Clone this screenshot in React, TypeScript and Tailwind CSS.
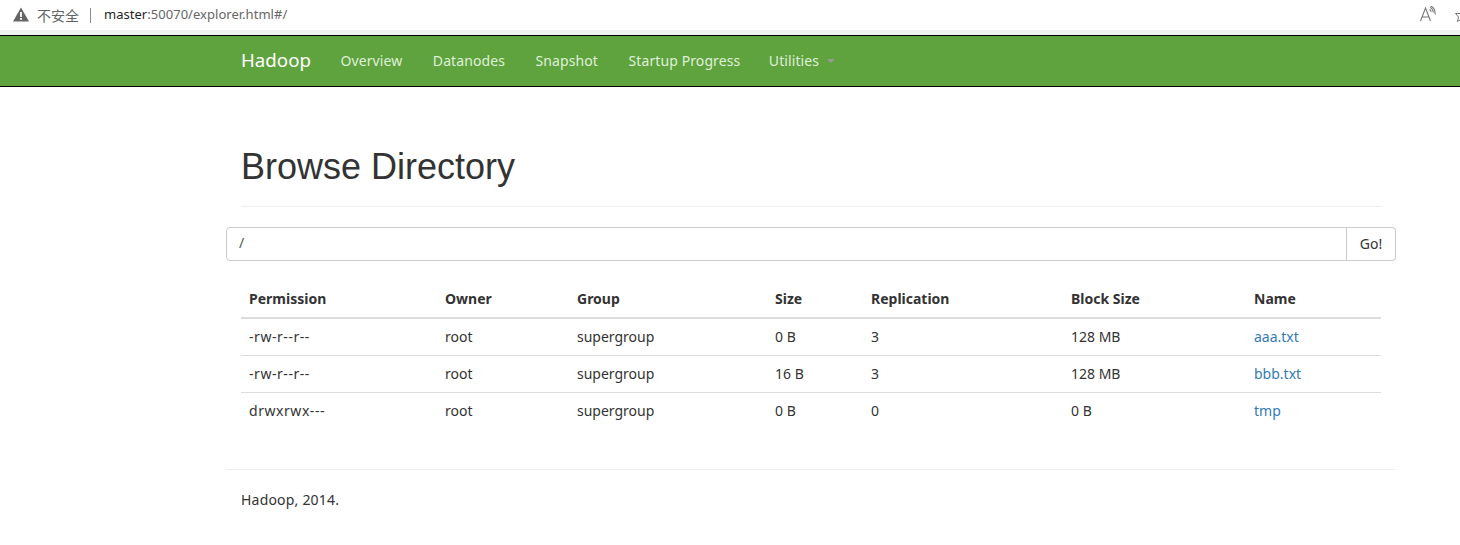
const uiFont = "font-['Noto_Sans','Open_Sans',sans-serif]";

const navItems = ["Overview", "Datanodes", "Snapshot", "Startup Progress"];

const rows = [
  { permission: "-rw-r--r--", owner: "root", group: "supergroup", size: "0 B", replication: "3", blockSize: "128 MB", name: "aaa.txt" },
  { permission: "-rw-r--r--", owner: "root", group: "supergroup", size: "16 B", replication: "3", blockSize: "128 MB", name: "bbb.txt" },
  { permission: "drwxrwx---", owner: "root", group: "supergroup", size: "0 B", replication: "0", blockSize: "0 B", name: "tmp" },
];

const headers = ["Permission", "Owner", "Group", "Size", "Replication", "Block Size", "Name"];

function AddressBar() {
  return (
    <div className="flex h-[30px] items-center bg-white pl-[13px]">
      <svg width="16" height="15" viewBox="0 0 16 15" className="mr-2 -mt-px">
        <path d="M8 0.5 L16 14.5 L0 14.5 Z" fill="#666666" />
        <rect x="7.1" y="5" width="1.8" height="5" fill="#ffffff" />
        <rect x="7.1" y="11" width="1.8" height="1.8" fill="#ffffff" />
      </svg>
      <span className="text-[14px] text-[#5f6368] font-['Noto_Sans_CJK_SC',sans-serif]">不安全</span>
      <span className="ml-[11px] mr-[13px] h-[15px] w-px bg-[#8a8a8a]" />
      <span className={`text-[13px] tracking-[0.03px] text-[#1f1f1f] ${uiFont}`}>
        master<span className="text-[#666666]">:50070/explorer.html#/</span>
      </span>
      <div className="ml-auto flex items-center gap-[19px] overflow-hidden">
        <svg width="16" height="16" viewBox="0 0 16 16" fill="none" stroke="#777777" strokeWidth="1.1" className="-mt-0.5">
          <path d="M0.5 15 L5.5 2 L10.5 15 M2 11 H9" />
          <path d="M9.5 3.5 C10.5 4 11 5 11.2 6 M10 1.5 C12 2.2 13 3.8 13.3 6.5 M10.5 0 C13.5 0.8 15 3.5 15.3 8.5" />
        </svg>
        <svg width="5" height="14" viewBox="0 0 5 14" fill="none" stroke="#777777" strokeWidth="1" className="mt-1">
          <path d="M0.5 3.5 H5 M0.5 3.5 L3.5 7 L2.5 11.5 L5 10" />
        </svg>
      </div>
    </div>
  );
}

function Navbar() {
  return (
    <nav className="h-[52px] border-y border-black bg-[#5fa33e]">
      <div className={`ml-[226px] flex h-full w-[1170px] items-center pb-0.5 pl-[15px] ${uiFont}`}>
        <a className="mr-[29.5px] text-[18.7px] text-white">Hadoop</a>
        <ul className="flex gap-[30.5px] text-[14px] tracking-[0.1px] text-[#dff0d8]">
          {navItems.map((item) => (
            <li key={item}>{item}</li>
          ))}
          <li className="-ml-0.5 flex items-center">
            Utilities
            <span className="ml-2 mt-0.5 h-0 w-0 border-x-4 border-t-4 border-x-transparent border-t-[#999999]" />
          </li>
        </ul>
      </div>
    </nav>
  );
}

export default function App() {
  return (
    <div className="h-[545px] overflow-hidden bg-white">
      <AddressBar />
      <div className="h-[5px] bg-[#f1f1f1]" />
      <Navbar />
      <main className={`ml-[226px] w-[1170px] text-[14px] text-[#333333] ${uiFont}`}>
        <div className="mx-[15px] mt-[60px] border-b border-[#eeeeee] pb-[19px]">
          <h1 className="font-['Liberation_Sans',sans-serif] text-[36px] leading-[40px] text-[#333333]">Browse Directory</h1>
        </div>

        <div className="mt-[20px] flex h-[34px]">
          <div className="flex flex-1 items-center rounded-l border border-[#cccccc] pb-1 pl-3 text-[#555555]">/</div>
          <button className="w-[49px] rounded-r border border-l-0 border-[#cccccc] bg-white pb-0.5 text-[#333333]">Go!</button>
        </div>

        <div className="mx-[15px] mt-[20px]">
          <table className="w-full table-fixed border-collapse text-left">
            <colgroup>
              <col className="w-[196px]" />
              <col className="w-[132px]" />
              <col className="w-[198px]" />
              <col className="w-[96px]" />
              <col className="w-[200px]" />
              <col className="w-[183px]" />
              <col />
            </colgroup>
            <thead>
              <tr className="border-b-2 border-[#dddddd]">
                {headers.map((h) => (
                  <th key={h} className="h-[37px] px-2 pb-0.5 font-bold">{h}</th>
                ))}
              </tr>
            </thead>
            <tbody>
              {rows.map((row) => (
                <tr key={row.name} className="border-b border-[#dddddd] last:border-b-0">
                  <td className="h-[37px] px-2 tracking-[0.55px]">{row.permission}</td>
                  <td className="px-2">{row.owner}</td>
                  <td className="px-2">{row.group}</td>
                  <td className="px-2">{row.size}</td>
                  <td className="px-2">{row.replication}</td>
                  <td className="px-2">{row.blockSize}</td>
                  <td className="px-2 text-[#337ab7]">{row.name}</td>
                </tr>
              ))}
            </tbody>
          </table>
        </div>

        <hr className="mt-[40px] border-[#eeeeee]" />
        <p className="mx-[15px] mt-[19px] tracking-[0.2px]">Hadoop, 2014.</p>
      </main>
    </div>
  );
}
